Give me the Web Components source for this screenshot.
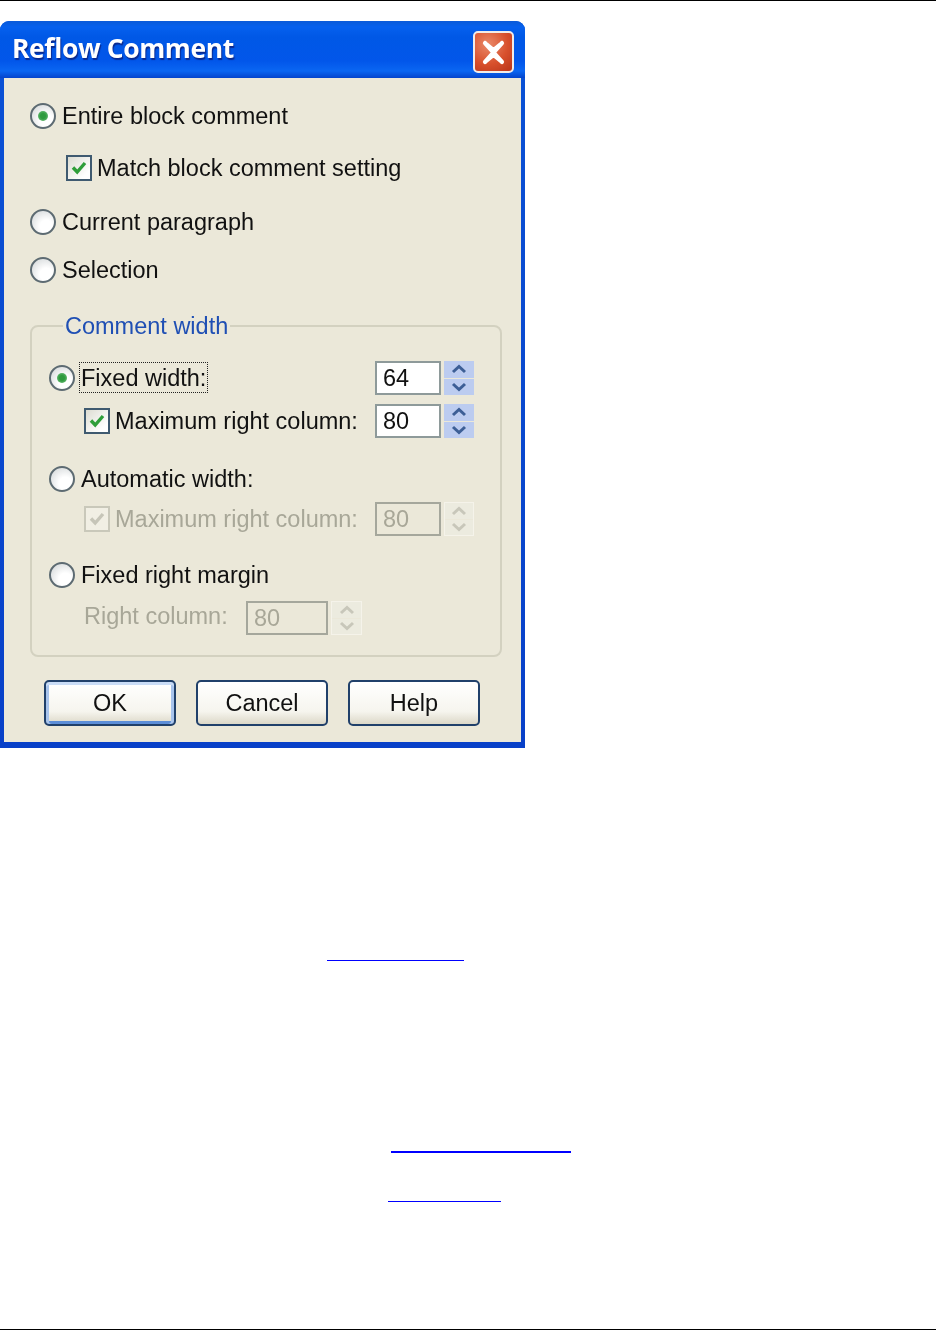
<!DOCTYPE html>
<html>
<head>
<meta charset="utf-8">
<title>Reflow Comment</title>
<style>
  html, body { margin: 0; padding: 0; background: #fff; }
  body { font-family: "Liberation Sans", Arial, sans-serif; }
</style>
</head>
<body>
<doc-page>
  <xp-dialog heading="Reflow Comment">
    <xp-radio checked>Entire block comment</xp-radio>
    <xp-check checked indent="36" style="margin-top:18px">Match block comment setting</xp-check>
    <xp-radio style="margin-top:20px">Current paragraph</xp-radio>
    <xp-radio style="margin-top:14px">Selection</xp-radio>
    <xp-group label="Comment width">
      <xp-radio checked focused>Fixed width:<xp-spin slot="end" value="64"></xp-spin></xp-radio>
      <xp-check checked indent="35" style="margin-top:9px">Maximum right column:<xp-spin slot="end" value="80"></xp-spin></xp-check>
      <xp-radio style="margin-top:24px">Automatic width:</xp-radio>
      <xp-check checked disabled indent="35" style="margin-top:6px">Maximum right column:<xp-spin slot="end" value="80" disabled></xp-spin></xp-check>
      <xp-radio style="margin-top:22px">Fixed right margin</xp-radio>
      <xp-field style="margin-top:9px" label="Right column:"><xp-spin value="80" wide disabled></xp-spin></xp-field>
    </xp-group>
    <xp-buttons>
      <xp-button default>OK</xp-button>
      <xp-button>Cancel</xp-button>
      <xp-button>Help</xp-button>
    </xp-buttons>
  </xp-dialog>
  <empty-link left="327" width="137" thick="1" style="margin-top:212px"></empty-link>
  <empty-link left="391" width="180" thick="2" style="margin-top:190px"></empty-link>
  <empty-link left="388" width="113" thick="1" style="margin-top:48px"></empty-link>
</doc-page>

<script>
class DocPage extends HTMLElement {
    constructor() {
        super();
        const root = this.attachShadow({ mode: 'open' });
        root.innerHTML = `
        <style>
            :host { display: flex; flex-direction: column; height: 1330px; box-sizing: border-box;
                    border-top: 1px solid #000; border-bottom: 1px solid #000; }
            .top { height: 20px; }
        </style>
        <div class="top"></div>
        <slot></slot>`;
    }
}
customElements.define('doc-page', DocPage);

class XpDialog extends HTMLElement {
    constructor() {
        super();
        const root = this.attachShadow({ mode: 'open' });
        const heading = this.getAttribute('heading') || '';
        root.innerHTML = `
        <style>
            :host { display: block; width: 525px; height: 727px; box-sizing: border-box;
                    border-radius: 9px 9px 0 0; overflow: hidden; flex: none;
                    background: linear-gradient(#0a52d6, #0840c8);
                    padding: 0 4px 6px 4px; color: #111;
                    display: flex; flex-direction: column; filter: blur(.45px); }
            .bar { height: 57px; margin: 0 -4px; padding: 0 11px 0 12px; flex: none;
                   display: flex; align-items: center; justify-content: space-between;
                   background: linear-gradient(#0a5ad8 0, #0560ee 6px, #0058e6 16px, #0256ea 40px, #0a66f2 50px, #0444cc 57px); }
            h1 { margin: 0 0 3px; font: bold 26.5px "Open Sans", "Liberation Sans", sans-serif; letter-spacing: -.4px;
                 color: #fff; text-shadow: 1px 2px 1px #0a2a90; }
            .close { width: 41px; height: 42px; box-sizing: border-box; margin-top: 5px; display: flex;
                     align-items: center; justify-content: center; border: 2px solid #f2ece8; border-radius: 5px;
                     background: radial-gradient(circle at 35% 30%, #ea8a6a, #d8502c 55%, #b8341a); }
            .body { flex: 1; background: #ebe8d9; padding: 21px 23px 0 26px; display: flex; flex-direction: column;
                    box-sizing: border-box; min-height: 0; }
        </style>
        <div class="bar">
            <h1>${heading}</h1>
            <div class="close"><svg width="27" height="27" viewBox="0 0 27 27"><path d="M5 4 L13.5 11 L22 4 M5 23 L13.5 16 L22 23 M5 4 L22 23 M22 4 L5 23" fill="none" stroke="#fff" stroke-width="4.2" stroke-linecap="round"/></svg></div>
        </div>
        <div class="body"><slot></slot></div>`;
    }
}
customElements.define('xp-dialog', XpDialog);

const rowStyle = `
    :host { display: flex; align-items: center; height: 34px; font-size: 23.5px; white-space: nowrap; }
    :host([disabled]) { color: #a8a798; }
    .text { line-height: 30px; padding: 0 1px; border: 1px solid transparent; margin-left: 4px; margin-top: -2px; box-sizing: border-box; height: 31px; }
    ::slotted([slot=end]) { margin-left: auto; }
`;

class XpRadio extends HTMLElement {
    constructor() {
        super();
        const root = this.attachShadow({ mode: 'open' });
        const checked = this.hasAttribute('checked');
        const focused = this.hasAttribute('focused');
        root.innerHTML = `
        <style>${rowStyle}
            .mark { width: 26px; height: 26px; flex: none; box-sizing: border-box; border-radius: 50%;
                    border: 2px solid #5d6b72; display: flex; align-items: center; justify-content: center;
                    background: radial-gradient(circle at 65% 70%, #fff 30%, #dcdfe0 80%); }
            .dot { width: 10px; height: 10px; border-radius: 50%; background: radial-gradient(circle, #2e9a3e 35%, #7fc88a); }
            .text.focus { border: 1px dotted #222; }
        </style>
        <span class="mark">${checked ? '<span class="dot"></span>' : ''}</span>
        <span class="text${focused ? ' focus' : ''}"><slot></slot></span>
        <slot name="end"></slot>`;
    }
}
customElements.define('xp-radio', XpRadio);

class XpCheck extends HTMLElement {
    constructor() {
        super();
        const root = this.attachShadow({ mode: 'open' });
        const indent = this.getAttribute('indent') || 0;
        const off = this.hasAttribute('disabled');
        root.innerHTML = `
        <style>${rowStyle}
            :host { padding-left: ${indent}px; }
            .box { width: 26px; height: 26px; flex: none; box-sizing: border-box;
                   border: 2px solid ${off ? '#c9c8ba' : '#3f5a70'};
                   background: ${off ? '#f1efe4' : 'linear-gradient(135deg, #dcdcd2, #fff 80%)'};
                   display: flex; align-items: center; justify-content: center; }
            .text { margin-left: 3px; }
        </style>
        <span class="box"><svg width="20" height="20" viewBox="0 0 20 20"><path d="M4 9.5 L8.2 14 L16 5" fill="none" stroke="${off ? '#c6c5b8' : '#2f9e3a'}" stroke-width="3.4"/></svg></span>
        <span class="text"><slot></slot></span>
        <slot name="end"></slot>`;
    }
}
customElements.define('xp-check', XpCheck);

class XpField extends HTMLElement {
    constructor() {
        super();
        const root = this.attachShadow({ mode: 'open' });
        root.innerHTML = `
        <style>
            :host { display: flex; align-items: center; height: 34px; font-size: 23.5px; color: #a8a798; padding-left: 35px; white-space: nowrap; }
            .text { width: 162px; flex: none; margin-top: -4px; }
        </style>
        <span class="text">${this.getAttribute('label')}</span>
        <slot></slot>`;
    }
}
customElements.define('xp-field', XpField);

class XpSpin extends HTMLElement {
    constructor() {
        super();
        const root = this.attachShadow({ mode: 'open' });
        const off = this.hasAttribute('disabled');
        const arrow = off ? '#c8c7ba' : '#3d5f96';
        root.innerHTML = `
        <style>
            :host { display: flex; height: 34px; gap: 3px; color: ${off ? '#a8a798' : '#111'}; flex: none; }
            .input { width: ${this.hasAttribute('wide') ? 82 : 66}px; box-sizing: border-box; line-height: 30px;
                     border: 2px solid ${off ? '#a5a79c' : '#8e9a9a'}; background: ${off ? '#ebe8d9' : '#fff'};
                     padding-left: 6px; font-size: 23.5px; }
            .btns { width: ${this.hasAttribute('wide') ? 31 : 30}px; display: flex; flex-direction: column; gap: 1px;
                    ${off ? 'border: 1px solid #f5f3ea; box-sizing: border-box;' : ''} }
            .btns span { flex: 1; display: flex; align-items: center; justify-content: center; background: ${off ? '#ecebdf' : '#bcccf0'}; }
        </style>
        <span class="input">${this.getAttribute('value')}</span>
        <span class="btns">
            <span><svg width="16" height="10" viewBox="0 0 16 10"><path d="M2 8 L8 2.5 L14 8" fill="none" stroke="${arrow}" stroke-width="3"/></svg></span>
            <span><svg width="16" height="10" viewBox="0 0 16 10"><path d="M2 2 L8 7.5 L14 2" fill="none" stroke="${arrow}" stroke-width="3"/></svg></span>
        </span>`;
    }
}
customElements.define('xp-spin', XpSpin);

class XpGroup extends HTMLElement {
    constructor() {
        super();
        const root = this.attachShadow({ mode: 'open' });
        root.innerHTML = `
        <style>
            :host { display: block; margin-top: 25px; }
            fieldset { margin: 0; width: 472px; height: 345px; box-sizing: border-box; border: 2px solid #d3d1c0; border-radius: 8px;
                       padding: 21px 26px 0 17px; }
            legend { padding: 0 2px; margin-left: 14px; font-size: 23.5px; line-height: 28px; color: #1f4fb4; }
        </style>
        <fieldset><legend>${this.getAttribute('label')}</legend><slot></slot></fieldset>`;
    }
}
customElements.define('xp-group', XpGroup);

class XpButtons extends HTMLElement {
    constructor() {
        super();
        this.attachShadow({ mode: 'open' }).innerHTML = `
        <style>:host { display: flex; gap: 20px; margin: 23px 0 0 14px; }</style>
        <slot></slot>`;
    }
}
customElements.define('xp-buttons', XpButtons);

class XpButton extends HTMLElement {
    constructor() {
        super();
        const root = this.attachShadow({ mode: 'open' });
        root.innerHTML = `
        <style>
            :host { display: flex; align-items: center; justify-content: center; width: 132px; height: 46px; box-sizing: border-box;
                    border: 2px solid #20406a; border-radius: 5px; font-size: 23.5px; color: #111;
                    background: linear-gradient(#fff, #f6f5ee 70%, #dcd8c8); }
            :host([default]) { box-shadow: inset 0 3px 0 #c9dcf6, inset 3px 0 0 #a8c4ec, inset -3px 0 0 #a8c4ec, inset 0 -3px 0 #5c8ed8; }
        </style>
        <slot></slot>`;
    }
}
customElements.define('xp-button', XpButton);

class EmptyLink extends HTMLElement {
    constructor() {
        super();
        const root = this.attachShadow({ mode: 'open' });
        root.innerHTML = `
        <style>
            :host { display: block; flex: none; margin-left: ${this.getAttribute('left')}px; width: ${this.getAttribute('width')}px;
                    height: ${this.getAttribute('thick')}px; background: #0000ff; }
        </style>`;
    }
}
customElements.define('empty-link', EmptyLink);
</script>
</body>
</html>
